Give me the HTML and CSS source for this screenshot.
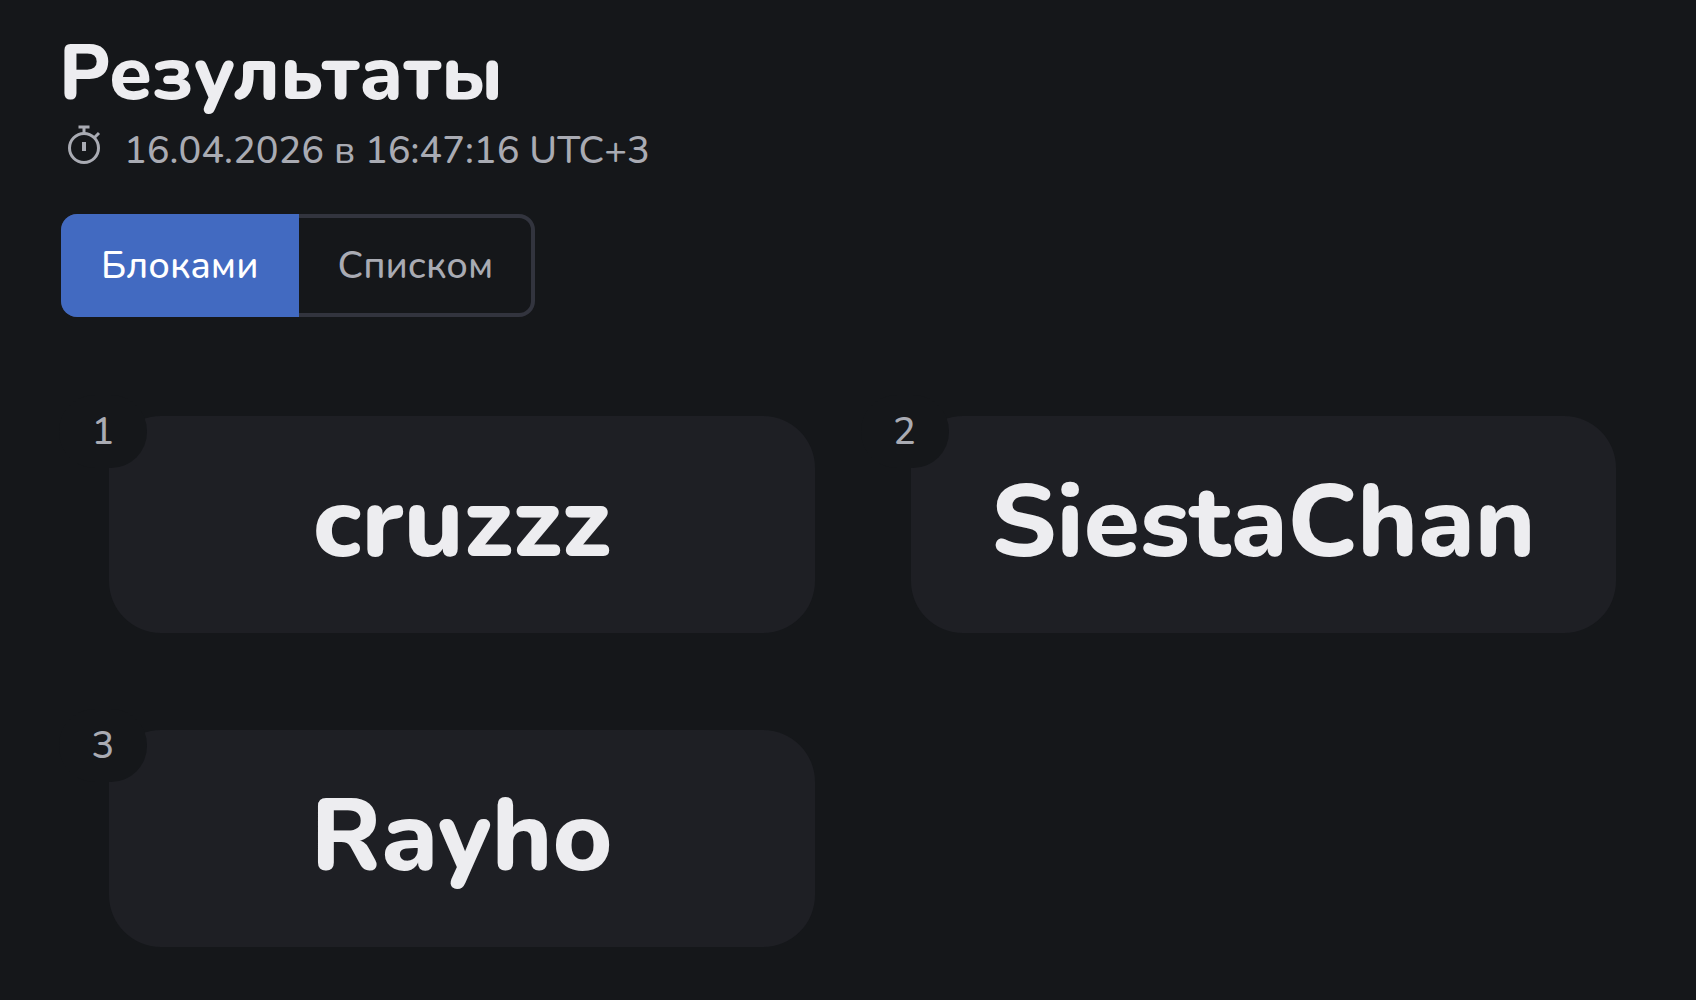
FILE: index.html
```html
<!DOCTYPE html>
<html lang="ru">
<head>
  <meta charset="UTF-8" />
  <meta name="viewport" content="width=device-width, initial-scale=1.0"/>
  <title>Результаты</title>
  <link rel="stylesheet" href="styles.css">
</head>
<body>
  <main class="results">
    <h1 class="title">Результаты</h1>
    <div class="date">
      <svg class="date-icon" viewBox="0 0 36 42" aria-hidden="true">
        <circle cx="18" cy="24" r="14.5"/>
        <path d="M18 9V3M12.5 3h11M28 14l5-5"/>
        <path class="hand" d="M18 18v9"/>
      </svg>
      <time datetime="2026-04-16T16:47:16+03:00">16.04.2026 в 16:47:16 UTC+3</time>
    </div>

    <div class="switch">
      <button class="switch-btn active" type="button" aria-pressed="true">Блоками</button>
      <button class="switch-btn" type="button" aria-pressed="false">Списком</button>
    </div>

    <div class="cards">
      <div class="card"><span class="place">1</span><span class="name">cruzzz</span></div>
      <div class="card"><span class="place">2</span><span class="name">SiestaChan</span></div>
      <div class="card"><span class="place">3</span><span class="name">Rayho</span></div>
    </div>
  </main>

  <script>
    const buttons = document.querySelectorAll('.switch-btn');
    const cards = document.querySelector('.cards');

    buttons.forEach((btn, index) => {
      btn.addEventListener('click', () => {
        buttons.forEach(b => {
          b.classList.toggle('active', b === btn);
          b.setAttribute('aria-pressed', b === btn);
        });
        cards.classList.toggle('list', index === 1);
      });
    });
  </script>
</body>
</html>
```

FILE: styles.css
```css
* {
  box-sizing: border-box;
}

body {
  margin: 0;
  background: #15171a;
  color: #ededf0;
  font-family: Nunito, Lato, 'Noto Sans', sans-serif;
}

.results {
  padding: 32px 32px 48px 61px;
}

.title {
  margin: 0 0 0 -2px;
  font-size: 77px;
  line-height: 84px;
  font-weight: 800;
}

.date {
  display: flex;
  align-items: center;
  gap: 22px;
  padding-left: 5px;
  color: #a9abb3;
  font-size: 38px;
  font-weight: 500;
  line-height: 70px;
}

.date-icon {
  width: 36px;
  height: 42px;
  margin-bottom: 12px;
  fill: none;
  stroke: currentColor;
  stroke-width: 3;
}

.date-icon .hand {
  stroke-width: 4;
}

.switch {
  display: inline-flex;
  margin-top: 28px;
  border: 4px solid #32343e;
  border-radius: 16px;
}

.switch-btn {
  padding: 23px 38px;
  border: none;
  border-radius: 0 12px 12px 0;
  background: transparent;
  color: #a9abb3;
  font-family: inherit;
  font-size: 38px;
  font-weight: 500;
  line-height: 49px;
  cursor: pointer;
}

.switch-btn.active {
  margin: -4px 0 -4px -4px;
  padding: 27px 41px 27px 40px;
  border-radius: 16px 0 0 16px;
  background: #426ac1;
  color: #fff;
}

.cards {
  display: grid;
  grid-template-columns: 1fr 1fr;
  gap: 97px 96px;
  padding: 99px 48px 0;
}

.cards.list {
  grid-template-columns: 1fr;
}

.card {
  position: relative;
  padding: 42px 48px 46px;
  border-radius: 52px;
  background: #1e1f24;
  text-align: center;
}

/* place number, cuts the corner of the card */
.place {
  position: absolute;
  top: -21px;
  left: -50px;
  width: 88px;
  border-radius: 36px;
  background: #15171a;
  color: #a9abb3;
  font-size: 38px;
  font-weight: 500;
  line-height: 73px;
}

.name {
  font-size: 102px;
  line-height: 129px;
  font-weight: 800;
}
```
